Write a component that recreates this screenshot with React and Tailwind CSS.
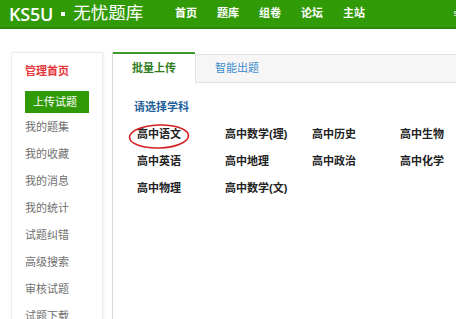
import React from "react";

const navItems = ["首页", "题库", "组卷", "论坛", "主站"];
const menu = ["我的题集", "我的收藏", "我的消息", "我的统计", "试题纠错", "高级搜索", "审核试题", "试题下载"];
const subjects = [
  "高中语文", "高中数学(理)", "高中历史", "高中生物",
  "高中英语", "高中地理", "高中政治", "高中化学",
  "高中物理", "高中数学(文)",
];

const cjk = { fontFamily: '"Liberation Sans", "Noto Sans CJK SC", sans-serif' };

export default function App() {
  return (
    <div className="w-[456px] h-[319px] overflow-hidden bg-white" style={cjk}>
      {/* Header */}
      <div className="h-[29px] bg-[#319a07] border-b-2 border-[#2b8a05] flex items-center">
        <div className="pl-[9px] w-[175px] shrink-0 flex items-center text-white leading-none">
          <span className="text-[18px] font-semibold tracking-[-0.2px]" style={{ fontFamily: '"Open Sans", sans-serif' }}>KS5U</span>
          <span className="mx-[8px] inline-block w-[4px] h-[4px] bg-white"></span>
          <span className="text-[17.5px]">无忧题库</span>
        </div>
        <nav className="flex gap-[20px] text-white text-[11px] font-bold">
          {navItems.map((n) => (
            <span key={n} className="w-[22px]">{n}</span>
          ))}
        </nav>
        <span className="ml-auto text-white text-[9px] mr-[-2px]">s</span>
      </div>

      {/* Body */}
      <div className="flex pt-[23px]">
        {/* Sidebar */}
        <div className="ml-[11px] w-[92px] h-[300px] border border-[#ececec] shadow-[1px_0_2px_#f0f0f0] pl-[13px] pt-[11px] shrink-0">
          <div className="text-[11px] font-bold text-[#e8373c] h-[14px] leading-[14px]">管理首页</div>
          <div className="mt-[13px] w-[64px] h-[22px] bg-[#319a07] text-white text-[11px] leading-[22px] pl-[8px]">上传试题</div>
          <div className="mt-[7px] flex flex-col gap-[13px] text-[11px] text-[#707070] leading-[14px]">
            {menu.map((m) => (
              <span key={m}>{m}</span>
            ))}
          </div>
        </div>

        {/* Main */}
        <div className="ml-[9px] w-[400px] shrink-0 border-l border-[#d8d8d8] h-[300px]">
          <div className="flex h-[31px]">
            <div className="w-[82px] border-t-2 border-[#3d9a2b] bg-white flex items-center justify-center text-[11px] font-bold text-[#2f7d1c]">
              批量上传
            </div>
            <div className="flex-1 mt-[2px] bg-[#f6f6f6] border-t border-l border-b border-[#e3e3e3] pl-[19px] flex items-center text-[11px] text-[#3d8ccc]">
              智能出题
            </div>
          </div>
          <div className="pl-[21px] pt-[17px] relative">
            <div className="text-[11px] font-bold text-[#1f5f99] leading-[14px]">请选择学科</div>
            <div className="mt-[13px] grid grid-cols-[88px_87px_88px_88px] gap-y-[13px] pl-[3px] text-[11px] font-bold text-[#222] leading-[14px]">
              {subjects.map((s) => (
                <span key={s}>{s}</span>
              ))}
            </div>
            <svg className="absolute left-[15px] top-[40px]" width="62" height="27" viewBox="0 0 62 27">
              <ellipse cx="31" cy="13.5" rx="29.5" ry="11.5" fill="none" stroke="#d42020" strokeWidth="1.6" transform="rotate(-2 31 13.5)" />
            </svg>
          </div>
        </div>
      </div>
    </div>
  );
}
